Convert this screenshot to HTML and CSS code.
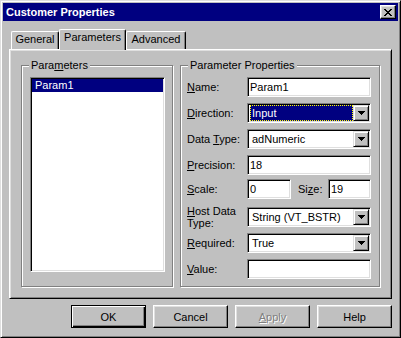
FILE: index.html
```html
<!DOCTYPE html>
<html lang="en">
<head>
    <meta charset="UTF-8">
    <meta name="viewport" content="width=device-width, initial-scale=1.0">
    <title>Customer Properties</title>
    <link rel="stylesheet" href="styles.css">
</head>
<body>
    <div class="window">
        <div class="titlebar">
            <span class="title">Customer Properties</span>
            <span class="close-btn">
                <svg width="8" height="7" viewBox="0 0 8 7" shape-rendering="crispEdges"><path fill="#000" d="M0 0h2v1H0z M6 0h2v1H6z M1 1h2v1H1z M5 1h2v1H5z M2 2h4v1H2z M3 3h2v1H3z M2 4h4v1H2z M1 5h2v1H1z M5 5h2v1H5z M0 6h2v1H0z M6 6h2v1H6z"/></svg>
            </span>
        </div>

        <div class="content">
            <div class="tabs">
                <div class="tab tab-general">General</div>
                <div class="tab tab-params active">Parameters</div>
                <div class="tab tab-advanced">Advanced</div>
            </div>

            <div class="panel">
                <div class="group group-list">
                    <span class="group-title">Para<u>m</u>eters</span>
                    <div class="listbox">
                        <div class="list-item selected">Param1</div>
                    </div>
                </div>

                <div class="group group-props">
                    <span class="group-title">Parameter Properties</span>

                    <div class="row">
                        <span class="label"><u>N</u>ame:</span>
                        <div class="field">Param1</div>
                    </div>
                    <div class="row">
                        <span class="label"><u>D</u>irection:</span>
                        <div class="combo">
                            <div class="combo-value focused">Input</div>
                            <div class="combo-btn"><svg width="7" height="4" viewBox="0 0 7 4" shape-rendering="crispEdges"><path fill="#000" d="M0 0h7v1H0z M1 1h5v1H1z M2 2h3v1H2z M3 3h1v1H3z"/></svg></div>
                        </div>
                    </div>
                    <div class="row">
                        <span class="label">Data <u>T</u>ype:</span>
                        <div class="combo">
                            <div class="combo-value">adNumeric</div>
                            <div class="combo-btn"><svg width="7" height="4" viewBox="0 0 7 4" shape-rendering="crispEdges"><path fill="#000" d="M0 0h7v1H0z M1 1h5v1H1z M2 2h3v1H2z M3 3h1v1H3z"/></svg></div>
                        </div>
                    </div>
                    <div class="row">
                        <span class="label"><u>P</u>recision:</span>
                        <div class="field">18</div>
                    </div>
                    <div class="row row-scale">
                        <span class="label"><u>S</u>cale:</span>
                        <div class="field field-scale">0</div>
                        <span class="size-label">Si<u>z</u>e:</span>
                        <div class="field field-size">19</div>
                    </div>
                    <div class="row row-host">
                        <span class="label label-two"><u>H</u>ost Data<br>Type:</span>
                        <div class="combo">
                            <div class="combo-value">String (VT_BSTR)</div>
                            <div class="combo-btn"><svg width="7" height="4" viewBox="0 0 7 4" shape-rendering="crispEdges"><path fill="#000" d="M0 0h7v1H0z M1 1h5v1H1z M2 2h3v1H2z M3 3h1v1H3z"/></svg></div>
                        </div>
                    </div>
                    <div class="row">
                        <span class="label"><u>R</u>equired:</span>
                        <div class="combo">
                            <div class="combo-value">True</div>
                            <div class="combo-btn"><svg width="7" height="4" viewBox="0 0 7 4" shape-rendering="crispEdges"><path fill="#000" d="M0 0h7v1H0z M1 1h5v1H1z M2 2h3v1H2z M3 3h1v1H3z"/></svg></div>
                        </div>
                    </div>
                    <div class="row">
                        <span class="label"><u>V</u>alue:</span>
                        <div class="field"></div>
                    </div>
                </div>
            </div>

            <div class="buttons">
                <button class="btn default">OK</button>
                <button class="btn">Cancel</button>
                <button class="btn disabled"><u>A</u>pply</button>
                <button class="btn">Help</button>
            </div>
        </div>
    </div>
</body>
</html>
```

FILE: styles.css
```css
* {
    box-sizing: border-box;
}
body {
    margin: 0;
    font-family: "Liberation Sans", Arial, sans-serif;
    font-size: 11px;
    color: #000;
    background-color: #c0c0c0;
}
.window {
    width: 401px;
    height: 338px;
    padding: 2px;
    background-color: #c0c0c0;
    border: 1px solid;
    border-color: #dfdfdf #000 #000 #dfdfdf;
    box-shadow: inset 1px 1px 0 #fff, inset -1px -1px 0 #808080;
    display: flex;
    flex-direction: column;
}
.titlebar {
    height: 18px;
    padding: 0 2px 0 3px;
    background-color: #000080;
    color: #fff;
    display: flex;
    align-items: center;
    justify-content: space-between;
}
.title {
    font-weight: bold;
}
.close-btn {
    width: 16px;
    height: 14px;
    background-color: #c0c0c0;
    border: 1px solid;
    border-color: #fff #000 #000 #fff;
    box-shadow: inset -1px -1px 0 #808080, inset 1px 1px 0 #dfdfdf;
    display: flex;
    align-items: center;
    justify-content: center;
    padding-right: 1px;
}
.close-btn svg {
    display: block;
}
.content {
    padding: 8px 6px 0;
    display: flex;
    flex-direction: column;
}

/* tabs */
.tabs {
    height: 20px;
    padding-left: 2px;
    display: flex;
    align-items: flex-end;
}
.tab {
    height: 18px;
    line-height: 15px;
    text-align: center;
    background-color: #c0c0c0;
    border-top: 1px solid #fff;
    border-left: 1px solid #fff;
    border-right: 1px solid #000;
    border-radius: 2px 2px 0 0;
    box-shadow: inset -1px 0 0 #808080;
}
.tab-general {
    width: 48px;
}
.tab-params {
    width: 67px;
}
.tab-advanced {
    width: 60px;
}
.tab.active {
    height: 21px;
    margin-bottom: -1px;
    position: relative;
    z-index: 1;
}

/* tab page */
.panel {
    height: 250px;
    padding: 15px 0 0 11px;
    border: 1px solid;
    border-color: #fff #000 #000 #fff;
    box-shadow: inset 1px 1px 0 #dfdfdf, inset -1px -1px 0 #808080;
    display: flex;
    gap: 7px;
}
.group {
    position: relative;
    height: 222px;
    border: 1px solid #808080;
    box-shadow: 1px 1px 0 #fff, inset 1px 1px 0 #fff;
}
.group-title {
    position: absolute;
    top: -7px;
    left: 7px;
    padding: 0 2px;
    line-height: 13px;
    background-color: #c0c0c0;
}
.group-list {
    width: 152px;
    padding: 11px 7px 0 8px;
}
.listbox {
    width: 135px;
    height: 195px;
    padding: 1px;
    background-color: #fff;
    border: 1px solid;
    border-color: #808080 #fff #fff #808080;
    box-shadow: inset 1px 1px 0 #000, inset -1px -1px 0 #dfdfdf;
}
.list-item {
    height: 13px;
    line-height: 13px;
    padding-left: 3px;
}
.list-item.selected {
    background-color: #000080;
    color: #fff;
}
.group-props {
    width: 200px;
    padding: 11px 8px 0 6px;
    display: flex;
    flex-direction: column;
    gap: 6px;
}
.row {
    height: 20px;
    display: flex;
    align-items: center;
}
.row-scale {
    margin-top: -2px;
}
.row-host {
    margin-top: 2px;
}
.label {
    width: 60px;
    flex-shrink: 0;
}
.label-two {
    line-height: 12px;
}
.field {
    width: 124px;
    height: 20px;
    padding: 0 2px;
    line-height: 18px;
    background-color: #fff;
    border: 1px solid;
    border-color: #808080 #fff #fff #808080;
    box-shadow: inset 1px 1px 0 #000, inset -1px -1px 0 #dfdfdf;
}
.field-scale {
    width: 44px;
}
.size-label {
    margin-left: 7px;
}
.field-size {
    width: 43px;
    margin-left: auto;
}
.combo {
    width: 124px;
    height: 20px;
    padding: 1px;
    background-color: #fff;
    border: 1px solid;
    border-color: #808080 #fff #fff #808080;
    box-shadow: inset 1px 1px 0 #000, inset -1px -1px 0 #dfdfdf;
    display: flex;
}
.combo-value {
    flex: 1;
    padding-left: 3px;
    line-height: 16px;
}
.combo-value.focused {
    margin-left: 1px;
    padding-left: 2px;
    background-color: #000080;
    color: #fff;
    outline: 1px dotted #ffff00;
    outline-offset: -1px;
}
.combo-btn {
    width: 16px;
    height: 16px;
    background-color: #c0c0c0;
    border: 1px solid;
    border-color: #dfdfdf #000 #000 #dfdfdf;
    box-shadow: inset 1px 1px 0 #fff, inset -1px -1px 0 #808080;
    display: flex;
    align-items: center;
    justify-content: center;
}
.combo-btn svg {
    display: block;
}

/* dialog buttons */
.buttons {
    margin-top: 6px;
    display: flex;
    justify-content: flex-end;
    gap: 7px;
}
.btn {
    width: 75px;
    height: 23px;
    padding: 0;
    font-family: inherit;
    font-size: 11px;
    color: #000;
    background-color: #c0c0c0;
    border: 1px solid;
    border-color: #fff #000 #000 #fff;
    box-shadow: inset -1px -1px 0 #808080, inset 1px 1px 0 #dfdfdf;
}
.btn.default {
    border-color: #000;
    box-shadow: inset 1px 1px 0 #fff, inset -1px -1px 0 #000, inset -2px -2px 0 #808080;
}
.btn.disabled {
    color: #808080;
    text-shadow: 1px 1px 0 #fff;
}
```
